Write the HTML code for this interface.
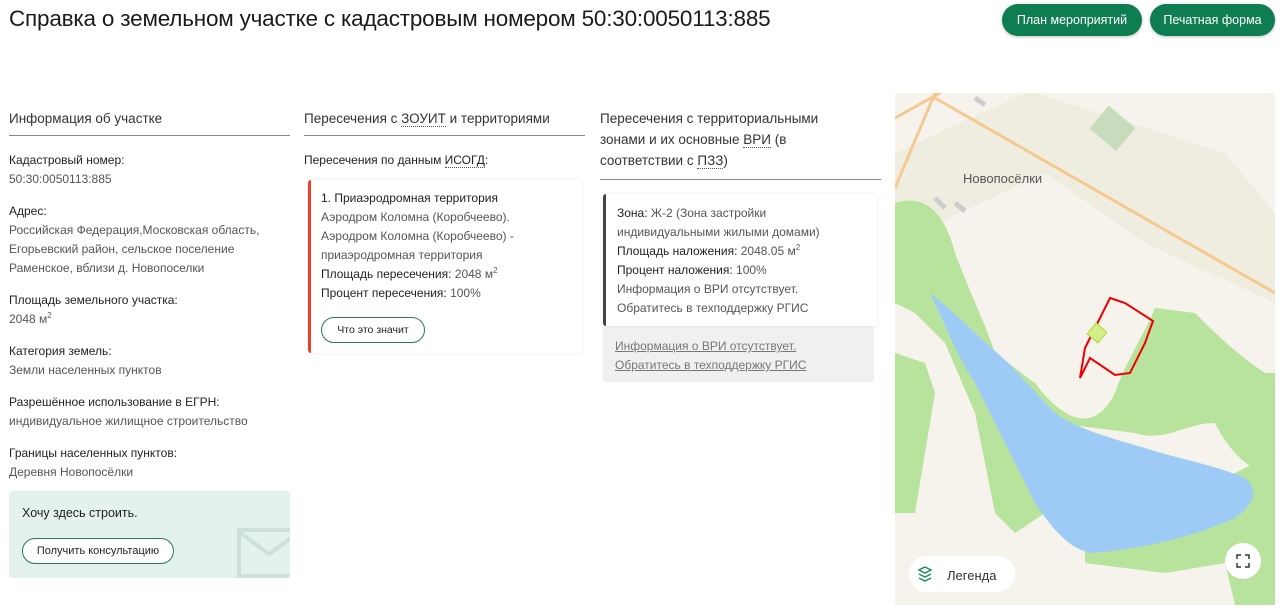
<!DOCTYPE html>
<html><head><meta charset="utf-8"><style>
*{margin:0;padding:0;box-sizing:border-box}
body{width:1280px;height:613px;overflow:hidden;background:#fff;font-family:"Liberation Sans",sans-serif;color:#222;position:relative}
.a{position:absolute}
h1{position:absolute;left:9px;top:6px;font-size:22.5px;font-weight:normal;color:#1a1a1a;letter-spacing:-0.2px}
.btn{position:absolute;top:4px;height:32px;border-radius:16px;background:#0f7d52;color:#fff;font-size:12.5px;line-height:32px;text-align:center;box-shadow:0 1px 3px rgba(0,0,0,.25)}
.hd{position:absolute;font-size:13.5px;color:#333;line-height:21px}
.ln{position:absolute;height:1px;background:#888}
.t{position:absolute;font-size:12px;line-height:19px;color:#555}
.t b{font-weight:normal;color:#222}
.dot{border-bottom:1px dotted #555}
.card{position:absolute;background:#fff;box-shadow:0 0 4px rgba(0,0,0,.08);border-radius:3px}
.ob{position:absolute;border:1px solid #2a7a5a;border-radius:13px;background:#fff;font-size:11px;color:#222;text-align:center}
sup{font-size:8px;line-height:0}
</style></head><body>
<h1>Справка о земельном участке с кадастровым номером 50:30:0050113:885</h1>
<div class="btn" style="left:1002px;width:140px">План мероприятий</div>
<div class="btn" style="left:1150px;width:125px">Печатная форма</div>

<div class="hd" style="left:9px;top:108px">Информация об участке</div>
<div class="ln" style="left:9px;top:135px;width:281px"></div>
<div class="t" style="left:9px;top:151px;width:285px">
<b>Кадастровый номер:</b><br>50:30:0050113:885<br>
<div style="height:13px"></div><b>Адрес:</b><br>Российская Федерация,Московская область, Егорьевский район, сельское поселение Раменское, вблизи д. Новопоселки<br>
<div style="height:13px"></div><b>Площадь земельного участка:</b><br>2048 м<sup>2</sup><br>
<div style="height:13px"></div><b>Категория земель:</b><br>Земли населенных пунктов<br>
<div style="height:13px"></div><b>Разрешённое использование в ЕГРН:</b><br>индивидуальное жилищное строительство<br>
<div style="height:13px"></div><b>Границы населенных пунктов:</b><br>Деревня Новопосёлки
</div>
<div class="a" style="left:9px;top:491px;width:281px;height:87px;background:#e3f2ec;border-radius:3px;overflow:hidden">
<div class="a" style="left:13px;top:15px;font-size:12.5px;color:#222">Хочу здесь строить.</div>
<div class="ob" style="left:13px;top:47px;width:152px;height:26px;line-height:24px">Получить консультацию</div>
<svg class="a" style="left:228px;top:37px" width="60" height="50"><rect x="2" y="2" width="60" height="46" fill="none" stroke="#cfe0d8" stroke-width="4"/><path d="M2 4 L32 26 L62 4" fill="none" stroke="#cfe0d8" stroke-width="4"/></svg>
</div>

<div class="hd" style="left:304px;top:108px">Пересечения с <span class="dot">ЗОУИТ</span> и территориями</div>
<div class="ln" style="left:304px;top:135px;width:281px"></div>
<div class="t" style="left:304px;top:151px"><b>Пересечения по данным <span class="dot">ИСОГД</span>:</b></div>
<div class="card" style="left:308px;top:180px;width:274px;height:173px;border-left:3px solid #e8412c">
<div class="t" style="left:10px;top:9px;width:250px"><b>1. Приаэродромная территория</b><br>Аэродром Коломна (Коробчеево).<br>Аэродром Коломна (Коробчеево) - приаэродромная территория<br><b>Площадь пересечения:</b> 2048 м<sup>2</sup><br><b>Процент пересечения:</b> 100%</div>
<div class="ob" style="left:10px;top:137px;width:104px;height:26px;line-height:24px;font-size:10.5px">Что это значит</div>
</div>

<div class="hd" style="left:600px;top:108px;width:250px">Пересечения с территориальными зонами и их основные <span class="dot">ВРИ</span> (в соответствии с <span class="dot">ПЗЗ</span>)</div>
<div class="ln" style="left:600px;top:179px;width:281px"></div>
<div class="a" style="left:603px;top:325px;width:271px;height:57px;background:#f0f0f0;border-radius:3px"></div>
<div class="t" style="left:615px;top:337px;text-decoration:underline;color:#777">Информация о ВРИ отсутствует.<br>Обратитесь в техподдержку РГИС</div>
<div class="card" style="left:603px;top:194px;width:274px;height:132px;border-left:3px solid #444">
<div class="t" style="left:11px;top:10px;width:255px"><b>Зона:</b> Ж-2 (Зона застройки индивидуальными жилыми домами)<br><b>Площадь наложения:</b> 2048.05 м<sup>2</sup><br><b>Процент наложения:</b> 100%<br>Информация о ВРИ отсутствует.<br>Обратитесь в техподдержку РГИС</div>
</div>

<svg class="a" style="left:895px;top:93px" width="380" height="512" viewBox="0 0 380 512">
<rect width="380" height="512" fill="#f6f3ec"/>
<path d="M0 60 L130 0 L380 0 L380 210 L250 150 L150 80 L0 150Z" fill="#efeddf"/>
<path d="M140 0 L380 0 L380 120 L330 60Z" fill="#f6f3ec"/>
<path d="M0 110 C30 100 50 120 60 160 C75 200 90 230 100 260 C115 270 125 280 140 290 C170 330 200 340 220 300 C230 270 250 240 260 215 L300 220 C320 240 340 260 370 280 L380 280 L380 380 C350 380 330 350 320 330 C290 330 270 350 240 340 L160 330 L150 420 L120 440 L100 420 L80 320 L50 250 L20 220 L0 210Z" fill="#b7e39c"/>
<path d="M0 260 L30 270 L40 300 L20 420 L0 420Z" fill="#b7e39c"/>
<path d="M190 380 L250 370 L300 400 L380 360 L380 512 L340 512 L330 470 L270 480 L190 470Z" fill="#b7e39c"/>
<path d="M35 200 C50 230 60 260 80 290 C100 330 120 370 140 410 C160 440 175 455 195 460 C230 458 290 448 340 425 C362 410 362 395 350 385 C320 372 280 365 250 355 C215 345 180 335 160 320 C140 300 120 275 100 258 C80 240 55 215 35 200Z" fill="#9ecbf5"/>
<path d="M0 25 L45 0 M0 95 L40 0" stroke="#f5c992" stroke-width="3" fill="none"/>
<path d="M40 0 L40 5 L380 200" stroke="#f5c992" stroke-width="3" fill="none"/>
<rect x="200" y="20" width="35" height="30" fill="#c8dcbc" transform="rotate(40 217 35)"/>
<path d="M40 105 L50 115 M60 110 L70 118 M80 5 L90 12" stroke="#ccc" stroke-width="5"/>
<text x="68" y="90" font-family="Liberation Sans" font-size="13" fill="#555">Новопосёлки</text>
<path d="M215 205 L230 210 L258 228 L250 250 L235 280 L220 282 L195 265 L185 285 L190 255Z" fill="none" stroke="#e00" stroke-width="2"/>
<rect x="195" y="233" width="14" height="14" fill="#d4ee8a" stroke="#aadd33" transform="rotate(40 202 240)"/>
<rect x="14" y="463" width="106" height="36" rx="18" fill="#fff"/>
<path d="M30 474 L36 477 L30 480 L24 477Z M24 481 L30 484 L36 481 M24 485 L30 488 L36 485" fill="none" stroke="#1f8a63" stroke-width="1.5"/>
<text x="52" y="487" font-family="Liberation Sans" font-size="13" fill="#333">Легенда</text>
<circle cx="348" cy="468" r="18" fill="#fff"/>
<path d="M342 466 v-4 h4 M350 462 h4 v4 M354 470 v4 h-4 M346 474 h-4 v-4" fill="none" stroke="#333" stroke-width="1.5"/>
</svg>
</body></html>
